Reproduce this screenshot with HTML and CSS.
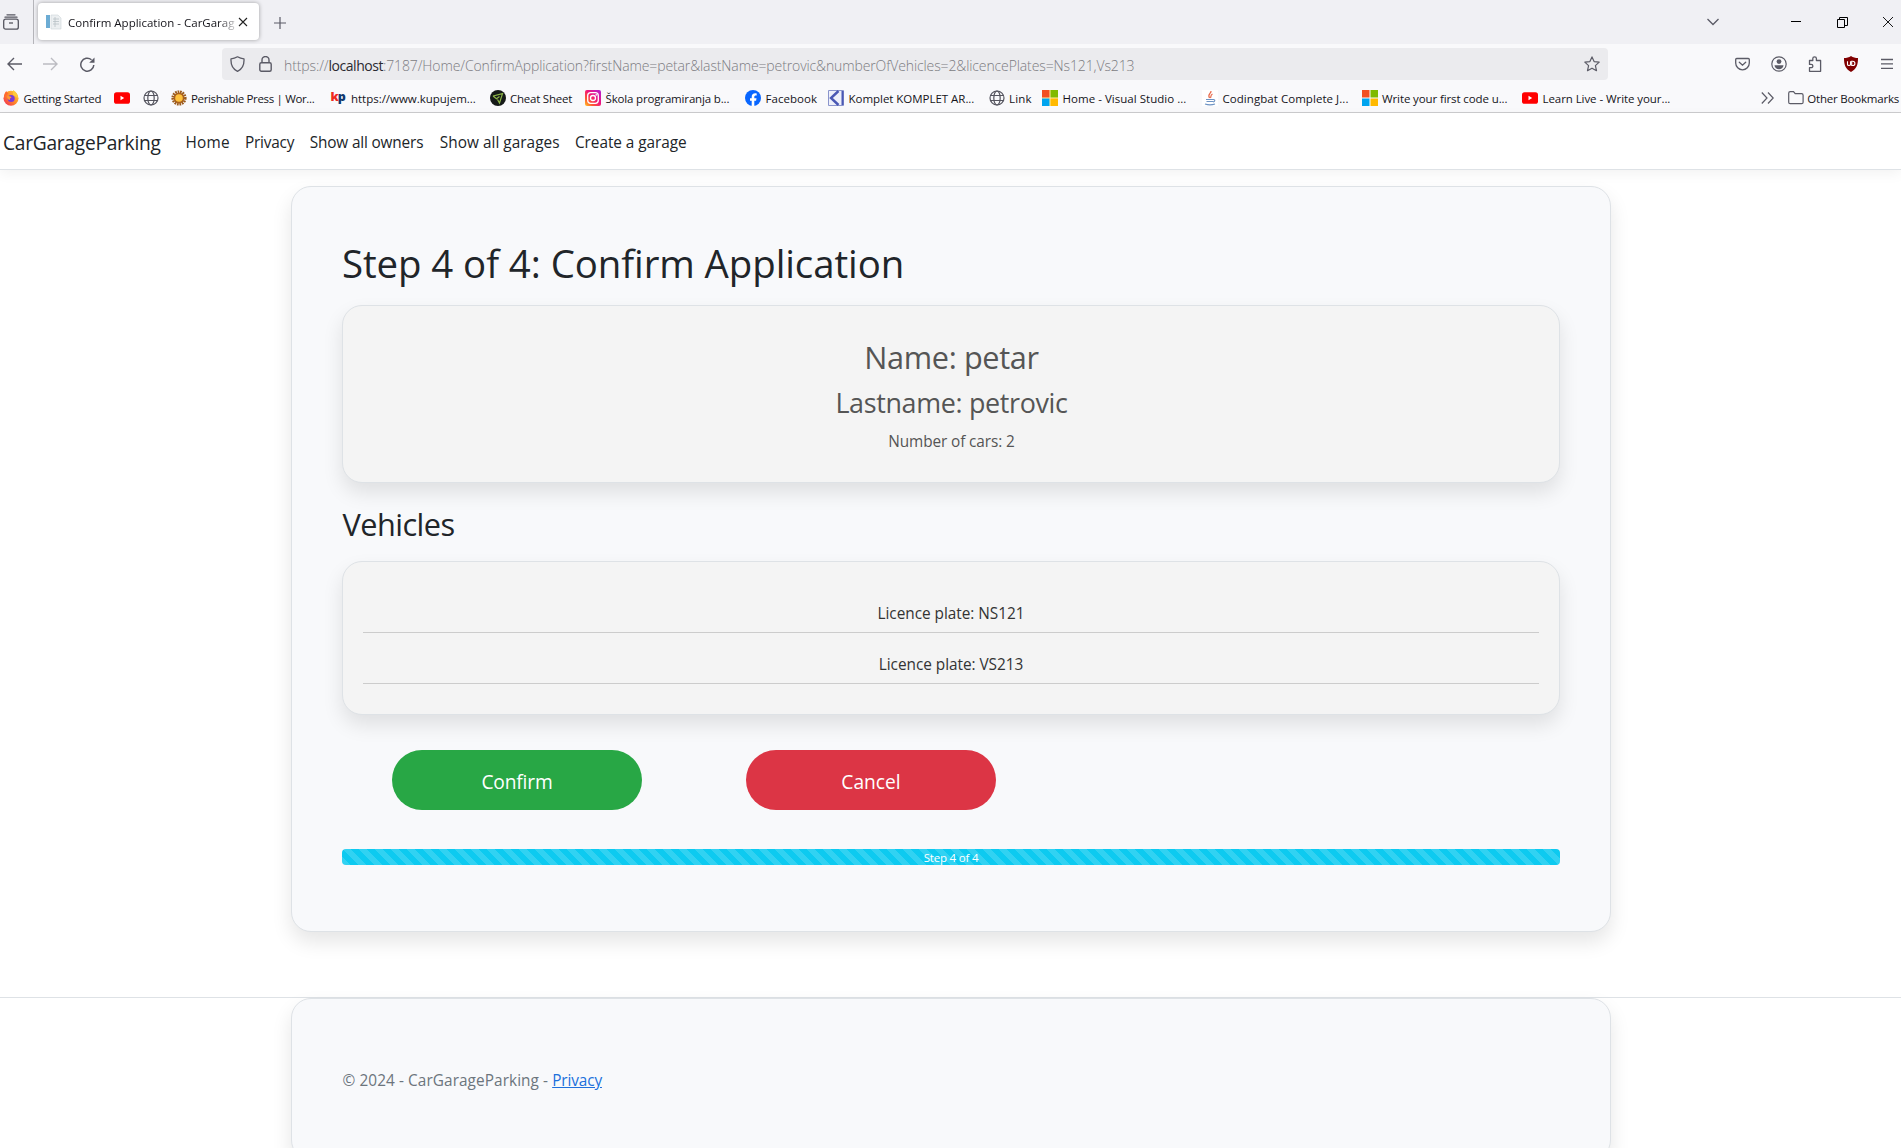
FILE: index.html
```html
<!DOCTYPE html>
<html lang="en">
<head>
<meta charset="utf-8">
<title>Confirm Application - CarGarageParking</title>
<link rel="stylesheet" href="styles.css">
</head>
<body>
<svg width="0" height="0" class="defs" aria-hidden="true">
  <defs>
    <symbol id="globe" viewBox="0 0 16 16"><g fill="none" stroke="#55555f" stroke-width="1.2"><circle cx="8" cy="8" r="7"/><ellipse cx="8" cy="8" rx="3.2" ry="7"/><path d="M1.6 5.5h12.8M1.6 10.5h12.8"/></g></symbol>
    <symbol id="youtube" viewBox="0 0 16 16"><rect y="2.2" width="16" height="11.6" rx="2.6" fill="#f00"/><path d="M6.500 5.800v4.400L10.200 8z" fill="#fff"/></symbol>
    <symbol id="microsoft" viewBox="0 0 16 16"><path d="M0 0h7.5v7.5H0z" fill="#f25022"/><path d="M8.5 0H16v7.5H8.5z" fill="#7fba00"/><path d="M0 8.500h7.500V16H0z" fill="#00a4ef"/><path d="M8.500 8.500H16V16H8.500z" fill="#ffb900"/></symbol>
    <linearGradient id="flame" x1="1" y1="0" x2="0" y2="1"><stop offset="0" stop-color="#ffd83a"/><stop offset=".5" stop-color="#ff8a2a"/><stop offset="1" stop-color="#f0205c"/></linearGradient>
    <linearGradient id="insta" x1="1" y1="0" x2="0" y2="1"><stop offset="0" stop-color="#b01fd8"/><stop offset=".45" stop-color="#f0147c"/><stop offset=".75" stop-color="#ff5a30"/><stop offset="1" stop-color="#ffc926"/></linearGradient>
  </defs>
</svg>

<header class="browser">
  <div class="tabstrip">
    <div class="recent"><svg width="16" height="16" viewBox="0 0 16 16" fill="none" stroke="#55555f" stroke-width="1.300"><path d="M4 .8h8M2 3.200h12" stroke-linecap="round"/><rect x=".7" y="5.200" width="14.600" height="10" rx="2"/><path d="M6 9h4"/></svg></div>
    <div class="tab">
      <svg class="favicon" width="16" height="16" viewBox="0 0 16 16"><path d="M0 1h4v13H0z" fill="#6cacd4"/><path d="M5 1h7l3 3v11H5z" fill="#eceff1" stroke="#cfd5d9" stroke-width=".6"/><path d="M7 5h6M7 7.500h6M7 10h6M9 3v10" stroke="#b9c1c7" stroke-width=".8"/></svg>
      <span class="tab-title">Confirm Application - CarGarageParking</span>
      <svg width="10" height="10" viewBox="0 0 10 10" stroke="#222" stroke-width="1.100"><path d="M1 1l8 8M9 1L1 9"/></svg>
    </div>
    <svg class="newtab" width="12" height="12" viewBox="0 0 12 12" stroke="#5b5b66" stroke-width="1.200"><path d="M6 0v12M0 6h12"/></svg>
    <svg class="alltabs" width="12" height="8" viewBox="0 0 12 8" fill="none" stroke="#5b5b66" stroke-width="1.300"><path d="M.5 1L6 6.500 11.500 1"/></svg>
    <svg class="winmin" width="10" height="10" viewBox="0 0 10 10" stroke="#000"><path d="M0 4.500h10"/></svg>
    <svg class="winmax" width="11" height="11" viewBox="0 0 11 11" fill="none" stroke="#000"><path d="M.5 2.500h7v8h-7zM2.500 2.500v-2h8v8h-3"/></svg>
    <svg class="winclose" width="10" height="10" viewBox="0 0 10 10" stroke="#000" stroke-width=".9"><path d="M0 0l10 10M10 0L0 10"/></svg>
  </div>

  <div class="toolbar">
    <svg class="back" width="15" height="14" viewBox="0 0 15 14" fill="none" stroke="#5b5b66" stroke-width="1.400"><path d="M15 7H1M7 1L1 7l6 6"/></svg>
    <svg class="forward" width="15" height="14" viewBox="0 0 15 14" fill="none" stroke="#bcbcc2" stroke-width="1.400"><path d="M0 7h14M8 1l6 6-6 6"/></svg>
    <svg class="reload" width="15" height="15" viewBox="0 0 15 15" fill="none" stroke="#5b5b66" stroke-width="1.500"><path d="M13.800 8A6.500 6.500 0 1 1 11.500 2.700"/><path d="M14.500.5v5.300H9.200z" fill="#5b5b66" stroke="none"/></svg>
    <div class="urlbar">
      <svg width="15" height="16" viewBox="0 0 15 16" fill="none" stroke="#5b5b66" stroke-width="1.300"><path d="M7.500.8C9.500 2 11.500 2.700 14 2.900c.3 5.300-1.500 10.100-6.500 12.400C2.500 13 .7 8.200 1 2.900 3.500 2.700 5.500 2 7.500.8z" stroke-linejoin="round"/></svg>
      <svg class="lock" width="13" height="16" viewBox="0 0 13 16" fill="none" stroke="#5b5b66" stroke-width="1.400"><rect x=".8" y="6.700" width="11.400" height="8.500" rx="1.500"/><path d="M3 6.700V4a3.500 3.500 0 0 1 7 0v2.700"/></svg>
      <span class="url">https://<b>localhost</b>:7187/Home/ConfirmApplication?firstName=petar&amp;lastName=petrovic&amp;numberOfVehicles=2&amp;licencePlates=Ns121,Vs213</span>
      <svg class="star" width="16" height="16" viewBox="0 0 16 16" fill="none" stroke="#5b5b66" stroke-width="1.200" stroke-linejoin="round"><path d="M8 .9l2.100 4.700 5.100.5-3.800 3.500 1.100 5.100L8 12.200l-4.500 2.500 1.100-5.100L.8 6.100l5.100-.5z"/></svg>
    </div>
    <div class="actions">
      <svg width="16" height="16" viewBox="0 0 16 16" fill="none" stroke="#5b5b66" stroke-width="1.300"><path d="M1.700 2.500h11.600c.6 0 1 .4 1 1V7a6.800 6.800 0 0 1-13.600 0V3.500c0-.6.400-1 1-1z"/><path d="M4.300 6.200l3.200 3 3.200-3" stroke-linecap="round"/></svg>
      <svg width="16" height="16" viewBox="0 0 16 16"><circle cx="8" cy="8" r="7.200" fill="none" stroke="#5b5b66" stroke-width="1.200"/><circle cx="8" cy="5.600" r="2.400" fill="#5b5b66"/><path d="M3.500 9.300h9c-.2 2.600-2.300 3.900-4.500 3.900s-4.300-1.300-4.500-3.900z" fill="#5b5b66"/></svg>
      <svg width="16" height="16" viewBox="0 0 16 16" fill="none" stroke="#5b5b66" stroke-width="1.300" stroke-linejoin="round"><path d="M2.500 4.500h3.300V2.600a1.800 1.800 0 0 1 3.600 0v1.900h4.200v10.800H2.500v-3.600h1.700a1.600 1.600 0 0 0 0-3.300H2.500z"/></svg>
      <svg width="16" height="16" viewBox="0 0 16 16"><path d="M8 0c2 1.500 4.500 2 7 2.100 0 7-1.500 10.900-7 13.900C2.500 13 1 9.100 1 2.100 3.500 2 6 1.500 8 0z" fill="#800000"/><path d="M4.500 5.200v3.300q0 1 1.500 1t1.500-1V5.200M8.700 5.200v4.300h1c1.500 0 2.200-.9 2.200-2.100s-.7-2.200-2.200-2.200z" fill="none" stroke="#fff" stroke-width="1.100"/></svg>
      <svg width="16" height="16" viewBox="0 0 16 16" stroke="#5b5b66" stroke-width="1.300"><path d="M2 3.500h12M2 7.900h12M2 12.300h12"/></svg>
    </div>
  </div>

  <nav class="bookmarks">
    <a class="bm bm-start"><svg viewBox="0 0 16 16"><circle cx="8" cy="8.300" r="7.500" fill="url(#flame)"/><path d="M1 7C1 4.500 2 2 3.500 1c0 1 1 2 2 2.500z" fill="#ff6a30"/><path d="M10 0c3 1.500 5 4.500 5 8l-5-3z" fill="#ffc93a"/><circle cx="8.200" cy="8.500" r="3.500" fill="#7a3ad8"/><path d="M4 6.500c2-1 4 .2 4.500 1.200-1.500 0-2 1-1.500 2.200-2 .2-3-1.700-3-3.400z" fill="#ff9a30"/></svg><span>Getting Started</span></a>
    <a class="bm bm-icon"><svg viewBox="0 0 16 16"><use href="#youtube"/></svg></a>
    <a class="bm bm-world"><svg viewBox="0 0 16 16"><use href="#globe"/></svg></a>
    <a class="bm bm-press"><svg viewBox="0 0 16 16"><circle cx="8" cy="8" r="6.300" fill="none" stroke="#9a5a1c" stroke-width="2.600" stroke-dasharray="1.700 .8"/><circle cx="8" cy="8" r="5.500" fill="#a8601c"/><circle cx="8" cy="8" r="3.800" fill="#ffc23c"/></svg><span>Perishable Press | Wor...</span></a>
    <a class="bm bm-kupujem"><i class="kp">k<em>p</em></i><span>https://www.kupujem...</span></a>
    <a class="bm bm-cheat"><svg viewBox="0 0 16 16"><circle cx="8" cy="8" r="8" fill="#161a18"/><path d="M3 6l9.500-2.300L9.500 13 7.500 9.500M3 6l3.500 2.700L9.500 6.500" fill="none" stroke="#8fb848" stroke-width="1.200"/></svg><span>Cheat Sheet</span></a>
    <a class="bm bm-skola"><svg viewBox="0 0 16 16"><rect width="16" height="16" rx="2" fill="url(#insta)"/><rect x="2.700" y="2.700" width="10.600" height="10.600" rx="3" fill="none" stroke="#fff" stroke-width="1.300"/><circle cx="8" cy="8" r="2.500" fill="none" stroke="#fff" stroke-width="1.300"/><circle cx="11.200" cy="4.900" r=".8" fill="#fff"/></svg><span>Škola programiranja b...</span></a>
    <a class="bm bm-facebook"><svg viewBox="0 0 16 16"><circle cx="8" cy="8" r="8" fill="#0866ff"/><path d="M6.700 16v-5.300H5V8.200h1.700V7c0-2.600 1.200-3.800 3.700-3.800.4 0 1 .1 1.300.2v2.200h-.9c-1.100 0-1.500.5-1.500 1.500v1.100h2.200l-.4 2.500H9.300V16z" fill="#fff"/></svg><span>Facebook</span></a>
    <a class="bm bm-komplet"><svg viewBox="0 0 16 16"><path d="M.5.5h15v15H.5z" fill="#eef0fa" stroke="#8a94cc"/><path d="M10.500 1L3 8l7.500 7" fill="none" stroke="#4a58b4" stroke-width="2.400"/><path d="M14.500 1v14" stroke="#4a58b4" stroke-width="2"/></svg><span>Komplet KOMPLET AR...</span></a>
    <a class="bm bm-link"><svg viewBox="0 0 16 16"><use href="#globe"/></svg><span>Link</span></a>
    <a class="bm bm-vs"><svg viewBox="0 0 16 16"><path d="M0 0h16v16H0z" fill="#ffe9a0"/><use href="#microsoft"/></svg><span>Home - Visual Studio ...</span></a>
    <a class="bm bm-java"><svg viewBox="0 0 16 16"><path d="M0 0h16v16H0z" fill="#fff"/><path d="M9 1C9.500 3.500 5 4 7.500 8M10.500 4C8 5.200 9.500 6.500 8.500 8" fill="none" stroke="#e8694a" stroke-width="1.200"/><path d="M4 9.500h7.500M4.500 11.500h6.500M11.500 9.500c2 0 1.500 2-.5 2.500M3 14c3 1 7 1 10 0" fill="none" stroke="#6d93c4" stroke-width="1.100"/></svg><span>Codingbat Complete J...</span></a>
    <a class="bm bm-code"><svg viewBox="0 0 16 16"><use href="#microsoft"/></svg><span>Write your first code u...</span></a>
    <a class="bm bm-learn"><svg viewBox="0 0 16 16"><use href="#youtube"/></svg><span>Learn Live - Write your...</span></a>
    <svg class="more" viewBox="0 0 13 12" fill="none" stroke="#5b5b66" stroke-width="1.200"><path d="M.8.5L6 6 .8 11.500M7 .5L12.200 6 7 11.500"/></svg>
    <a class="bm bm-other"><svg viewBox="0 0 16 16" fill="none" stroke="#5b5b66" stroke-width="1.200"><path d="M.7 3.200c0-.9.600-1.500 1.500-1.500h3.300l1.700 2h6.400c.9 0 1.500.6 1.500 1.500v7c0 .9-.6 1.500-1.500 1.500H2.200c-.9 0-1.500-.6-1.500-1.500z"/></svg><span>Other Bookmarks</span></a>
  </nav>
</header>

<nav class="navbar">
  <a class="brand">CarGarageParking</a>
  <a class="nav-link nav-home">Home</a>
  <a class="nav-link nav-privacy">Privacy</a>
  <a class="nav-link nav-owners">Show all owners</a>
  <a class="nav-link nav-garages">Show all garages</a>
  <a class="nav-link nav-create">Create a garage</a>
</nav>

<main class="container">
  <h1>Step 4 of 4: Confirm Application</h1>
  <section class="card owner">
    <h2>Name: petar</h2>
    <h3>Lastname: petrovic</h3>
    <p>Number of cars: 2</p>
  </section>
  <h2 class="section-title">Vehicles</h2>
  <ul class="card vehicles">
    <li>Licence plate: NS121</li>
    <li>Licence plate: VS213</li>
  </ul>
  <div class="buttons">
    <button class="btn confirm">Confirm</button>
    <button class="btn cancel">Cancel</button>
  </div>
  <div class="progress">Step 4 of 4</div>
</main>

<footer class="footer">
  <div class="container"><span class="copy">© 2024 - CarGarageParking -</span> <a class="privacy">Privacy</a></div>
</footer>
</body>
</html>
```
FILE: styles.css
```css
* { box-sizing: border-box; }
html { overflow: hidden; }
body { margin: 0; height: 1148px; overflow: hidden; background: #fff; color: #212529; font: 15.36px/24px "Open Sans", "Noto Sans", sans-serif; }
svg { display: block; flex: none; }
.defs { position: absolute; }
h1, h2, h3, p, ul { margin: 0; padding: 0; font-weight: 400; }

/* Browser chrome */
.browser { height: 113px; background: #f9f9fb; border-bottom: 1px solid #ccccce; color: #15141a; }
.tabstrip { height: 44px; background: #f0f0f4; display: flex; align-items: center; }
.recent { width: 34px; height: 44px; padding: 14px 0 0 3px; border-right: 1px solid #b5b5ba; }
.tab { width: 221px; height: 37px; margin: 0 0 1px 4px; padding: 0 11px 0 8px; display: flex; align-items: center; background: #fff; border-radius: 4px; box-shadow: 0 0 4px rgba(0,0,0,.35); }
.tab-title { width: 168px; margin: 2px 3px 0 6px; overflow: hidden; white-space: nowrap; font-size: 11.5px; -webkit-mask-image: linear-gradient(to right, #000 150px, transparent 172px); mask-image: linear-gradient(to right, #000 150px, transparent 172px); }
.newtab { margin-left: 15px; margin-top: 1px; }
.alltabs { margin-left: auto; }
.winmin { margin-left: 72px; }
.winmax { margin-left: 36px; }
.winclose { margin: 0 8px 0 35px; }

.toolbar { height: 40px; display: flex; align-items: center; }
.back { margin-left: 7px; }
.forward { margin-left: 21px; }
.reload { margin-left: 22px; }
.urlbar { width: 1386px; height: 32px; margin-left: 127px; padding: 0 8px 0 8px; display: flex; align-items: center; background: #ebebee; border-radius: 4px; }
.lock { margin-left: 14px; }
.url { margin: 3px 0 0 12px; font-size: 14px; letter-spacing: -.115px; color: #7c7c82; white-space: nowrap; font-weight: 300; }
.url b { font-weight: 400; color: #2a2930; letter-spacing: -.46px; }
.star { margin-left: auto; }
.actions { flex: 1; margin: 0 6px 0 127px; display: flex; justify-content: space-between; }

.bookmarks { height: 28px; display: flex; align-items: center; padding-left: 3px; font-size: 11.5px; }
.bm { display: flex; align-items: center; gap: 4.500px; flex: none; white-space: nowrap; }
.bm svg { width: 16px; height: 16px; }
.bm span { position: relative; top: 1px; }
.bm-start { width: 111px; letter-spacing: -.24px; }
.bm-icon { width: 28.500px; }
.bm-world { width: 28px; }
.bm-press { width: 160px; letter-spacing: -.34px; }
.bm-kupujem { width: 159px; letter-spacing: -.02px; }
.bm-cheat { width: 95.500px; letter-spacing: -.23px; }
.bm-skola { width: 160px; letter-spacing: -.16px; }
.bm-facebook { width: 83px; letter-spacing: .04px; }
.bm-komplet { width: 160.500px; letter-spacing: -.03px; }
.bm-link { width: 53.500px; letter-spacing: .2px; }
.bm-vs { width: 160px; letter-spacing: .03px; }
.bm-java { width: 159.500px; letter-spacing: .05px; }
.bm-code { width: 160.500px; letter-spacing: -.11px; }
.bm-learn { letter-spacing: -.07px; }
.more { width: 13px; height: 12px; margin: 0 14px 0 auto; }
.bm-other { margin-right: 2px; letter-spacing: -.21px; gap: 3px; }
.kp { width: 16px; height: 18px; font: 800 12.5px/16px "Open Sans", sans-serif; letter-spacing: -1px; color: #ef2b1f; }
.kp em { font-style: normal; color: #12386e; }

/* Site navigation */
.navbar { position: relative; height: 57px; padding: 0 0 0 3px; display: flex; align-items: center; background: #fff; border-bottom: 1px solid #dee2e6; box-shadow: 0 4px 12px rgba(0,0,0,.05); white-space: nowrap; }
.brand { width: 182.500px; font-size: 19.200px; line-height: 30px; letter-spacing: -.28px; margin-top: 4px; }
.nav-link { margin-top: 4px; }
.nav-home { width: 59.500px; letter-spacing: .27px; }
.nav-privacy { width: 64.800px; letter-spacing: -.21px; }
.nav-owners { width: 130px; letter-spacing: -.17px; }
.nav-garages { width: 135.200px; letter-spacing: .03px; }
.nav-create { letter-spacing: -.05px; }

/* Page content */
.container { width: 1320px; margin: 16px auto 0; padding: 50px; background: #f8f9fb; border: 1px solid #dee2e6; border-radius: 20px; box-shadow: 0 10px 20px rgba(0,0,0,.1); }
main.container { height: 746px; }
h1 { font-size: 38.400px; line-height: 53px; letter-spacing: -.08px; margin-bottom: 15px; padding-left: .5px; }
.card { background: #f4f4f4; border: 1px solid #dee2e6; border-radius: 20px; box-shadow: 0 10px 20px rgba(0,0,0,.1); text-align: center; }
.owner { height: 178px; padding: 32px 19px 0 21px; color: #555; }
.owner h2 { font-size: 30.700px; line-height: 39px; letter-spacing: -.37px; margin-bottom: 9px; }
.owner h3 { font-size: 26.900px; line-height: 34px; letter-spacing: -.34px; margin-bottom: 10px; }
.owner p { letter-spacing: -.11px; }
.section-title { margin: 22px 0 17px; padding-left: 1px; font-size: 30.700px; line-height: 39px; letter-spacing: -.55px; }
.vehicles { height: 154px; padding: 30px 20px 0; list-style: none; color: #333; letter-spacing: -.03px; }
.vehicles li { height: 41px; padding: 10px 0 0 1px; border-bottom: 1px solid #ccc; margin-bottom: 10px; }
.buttons { margin: 35px 0 39px 50px; display: flex; gap: 104px; }
.btn { width: 250px; height: 60px; padding: 3px 0 0 1px; border: 0; border-radius: 30px; color: #fff; font: 19.200px "Open Sans", "Noto Sans", sans-serif; }
.confirm { background: #28a745; letter-spacing: -.16px; }
.cancel { background: #dc3545; }
.progress { height: 16px; padding-left: 1px; border-radius: 4px; overflow: hidden; color: #fff; text-align: center; font-size: 11.500px; line-height: 18px; letter-spacing: -.2px; background: linear-gradient(45deg, rgba(255,255,255,.15) 25%, transparent 25%, transparent 50%, rgba(255,255,255,.15) 50%, rgba(255,255,255,.15) 75%, transparent 75%, transparent) 0 0 / 16px 16px #0dcaf0; }

.footer { margin-top: 65px; border-top: 1px solid #dee2e6; color: #6c757d; line-height: 60px; }
.footer .container { margin-top: 0; height: 162px; padding: 52px 50px 0 51px; }
.copy { letter-spacing: .08px; }
.privacy { color: #2070dc; text-decoration: underline; letter-spacing: -.12px; }
```
